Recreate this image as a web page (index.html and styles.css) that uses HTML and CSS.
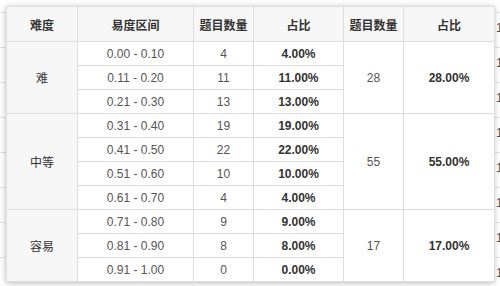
FILE: index.html
```html
<!DOCTYPE html>
<html lang="zh">
<head>
<meta charset="utf-8">
<link rel="stylesheet" href="styles.css">
</head>
<body>
<div class="bg">
  <div class="bg-row"><span class="bg-cell">10</span></div>
  <div class="bg-row"><span class="bg-cell">11</span></div>
  <div class="bg-row"><span class="bg-cell">12</span></div>
  <div class="bg-row"><span class="bg-cell">13</span></div>
  <div class="bg-row"><span class="bg-cell">14</span></div>
  <div class="bg-row"><span class="bg-cell">15</span></div>
  <div class="bg-row"><span class="bg-cell">16</span></div>
  <div class="bg-row"><span class="bg-cell">17</span></div>
</div>
<div class="popover">
  <table class="tbl">
    <colgroup>
      <col class="c1"><col class="c2"><col class="c3"><col class="c4"><col class="c5"><col class="c6">
    </colgroup>
    <thead>
      <tr><th>难度</th><th>易度区间</th><th>题目数量</th><th>占比</th><th>题目数量</th><th>占比</th></tr>
    </thead>
    <tbody>
      <tr><td class="lvl" rowspan="3">难</td><td>0.00 - 0.10</td><td>4</td><td class="b">4.00%</td><td rowspan="3">28</td><td class="b" rowspan="3">28.00%</td></tr>
      <tr><td>0.11 - 0.20</td><td>11</td><td class="b">11.00%</td></tr>
      <tr><td>0.21 - 0.30</td><td>13</td><td class="b">13.00%</td></tr>
      <tr><td class="lvl" rowspan="4">中等</td><td>0.31 - 0.40</td><td>19</td><td class="b">19.00%</td><td rowspan="4">55</td><td class="b" rowspan="4">55.00%</td></tr>
      <tr><td>0.41 - 0.50</td><td>22</td><td class="b">22.00%</td></tr>
      <tr><td>0.51 - 0.60</td><td>10</td><td class="b">10.00%</td></tr>
      <tr><td>0.61 - 0.70</td><td>4</td><td class="b">4.00%</td></tr>
      <tr><td class="lvl" rowspan="3">容易</td><td>0.71 - 0.80</td><td>9</td><td class="b">9.00%</td><td rowspan="3">17</td><td class="b" rowspan="3">17.00%</td></tr>
      <tr><td>0.81 - 0.90</td><td>8</td><td class="b">8.00%</td></tr>
      <tr><td>0.91 - 1.00</td><td>0</td><td class="b">0.00%</td></tr>
    </tbody>
  </table>
</div>
</body>
</html>
```
FILE: styles.css
```css
* { box-sizing: border-box; }
html, body { margin: 0; padding: 0; }
body {
  width: 500px;
  height: 286px;
  overflow: hidden;
  background: #fff;
  font-family: "Liberation Sans", Arial, "Noto Sans CJK SC", sans-serif;
  font-size: 12px;
  color: #555;
  position: relative;
}
.bg { padding-top: 12px; }
.bg-row {
  height: 35px;
  border-top: 1px solid #e3e3e3;
  display: flex;
  align-items: center;
  padding-left: 496px;
  white-space: nowrap;
  overflow: hidden;
}
.bg-cell { color: #555; margin-top: -4px; }
.popover {
  position: absolute;
  left: 6px;
  top: 6px;
  width: 488px;
  background: #fff;
  box-shadow: 0 1px 6px rgba(0,0,0,0.28);
}
.tbl {
  width: 488px;
  table-layout: fixed;
  border-collapse: collapse;
}
.c1 { width: 71px; }
.c2 { width: 116px; }
.c3 { width: 60px; }
.c4 { width: 90px; }
.c5 { width: 60px; }
.c6 { width: 91px; }
.tbl th, .tbl td {
  border: 1px solid #dedede;
  text-align: center;
  padding: 0;
}
.tbl th {
  height: 35px;
  background: #f7f7f7;
  color: #333;
  font-weight: bold;
}
.tbl td { height: 24px; }
.tbl td.lvl { background: #f7f7f7; color: #333; }
.tbl td.b { font-weight: bold; color: #333; }
```
